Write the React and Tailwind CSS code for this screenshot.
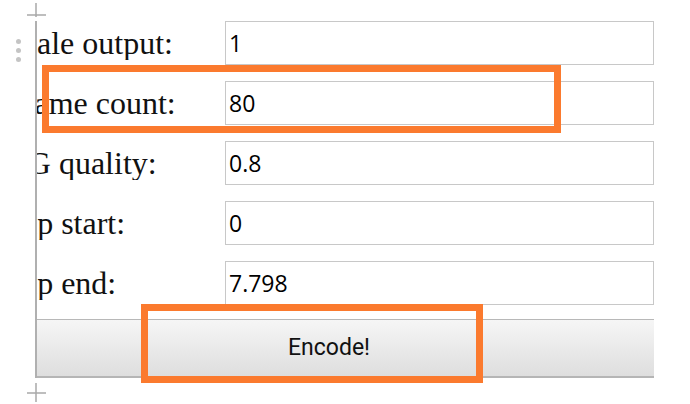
import React from "react";

const rows = [
  { label: "Scale output:", ml: "-ml-[32px]", value: "1" },
  { label: "Frame count:", ml: "-ml-[31px]", value: "80" },
  { label: "JPEG quality:", ml: "-ml-[59px]", value: "0.8" },
  { label: "Clip start:", ml: "-ml-[39px]", value: "0" },
  { label: "Clip end:", ml: "-ml-[39px]", value: "7.798" },
];

export default function App() {
  return (
    <div className="relative w-[690px] h-[404px] bg-white overflow-hidden">
      {/* editor decorations */}
      <svg className="absolute left-0 top-0" width="60" height="30">
        <line x1="36" y1="3" x2="36" y2="17" stroke="#a8a8a8" strokeWidth="1.5" />
        <line x1="27" y1="15" x2="46" y2="15" stroke="#a8a8a8" strokeWidth="1.5" />
      </svg>
      <svg className="absolute left-0 top-[378px]" width="60" height="26">
        <line x1="36" y1="5" x2="36" y2="24" stroke="#a8a8a8" strokeWidth="1.5" />
        <line x1="27" y1="15" x2="46" y2="15" stroke="#a8a8a8" strokeWidth="1.5" />
      </svg>
      <div className="absolute left-[16px] top-[39px] flex flex-col gap-[4px]">
        <div className="w-[5px] h-[5px] rounded-full bg-[#c4c4c4]" />
        <div className="w-[5px] h-[5px] rounded-full bg-[#c4c4c4]" />
        <div className="w-[5px] h-[5px] rounded-full bg-[#c4c4c4]" />
      </div>

      {/* frame */}
      <div className="ml-[35px] mt-[21px] w-[619px] border-l-2 border-[#b0b0b0] flex flex-col">
        <div className="flex flex-col gap-[16px]">
          {rows.map((r) => (
            <div key={r.label} className="flex items-center h-[44px]">
              <div className="w-[188px] overflow-hidden whitespace-nowrap">
                <span
                  className={`inline-block ${r.ml} text-[32px] leading-none text-[#111]`}
                  style={{ fontFamily: '"Liberation Serif", serif' }}
                >
                  {r.label}
                </span>
              </div>
              <div
                className="flex-1 h-[44px] border border-[#c8c8c8] bg-white flex items-center pl-[3px] text-[23px] text-black"
                style={{ fontFamily: '"Open Sans", sans-serif' }}
              >
                {r.value}
              </div>
            </div>
          ))}
        </div>
        <div className="mt-[14px] h-[59px] border-t border-b-2 border-t-[#b8b8b8] border-b-[#b5b5b5] bg-gradient-to-b from-[#f6f6f6] to-[#dedede] flex items-center pl-[251px]">
          <span
            className="text-[23px] text-[#111]"
            style={{ fontFamily: "Roboto, sans-serif" }}
          >
            Encode!
          </span>
        </div>
      </div>

      {/* highlight overlays */}
      <div className="absolute left-[42px] top-[65px] w-[519px] h-[68px] border-[7px] border-[#fb7a2e]" />
      <div className="absolute left-[141px] top-[304px] w-[342px] h-[79px] border-[7px] border-[#fb7a2e]" />
    </div>
  );
}
